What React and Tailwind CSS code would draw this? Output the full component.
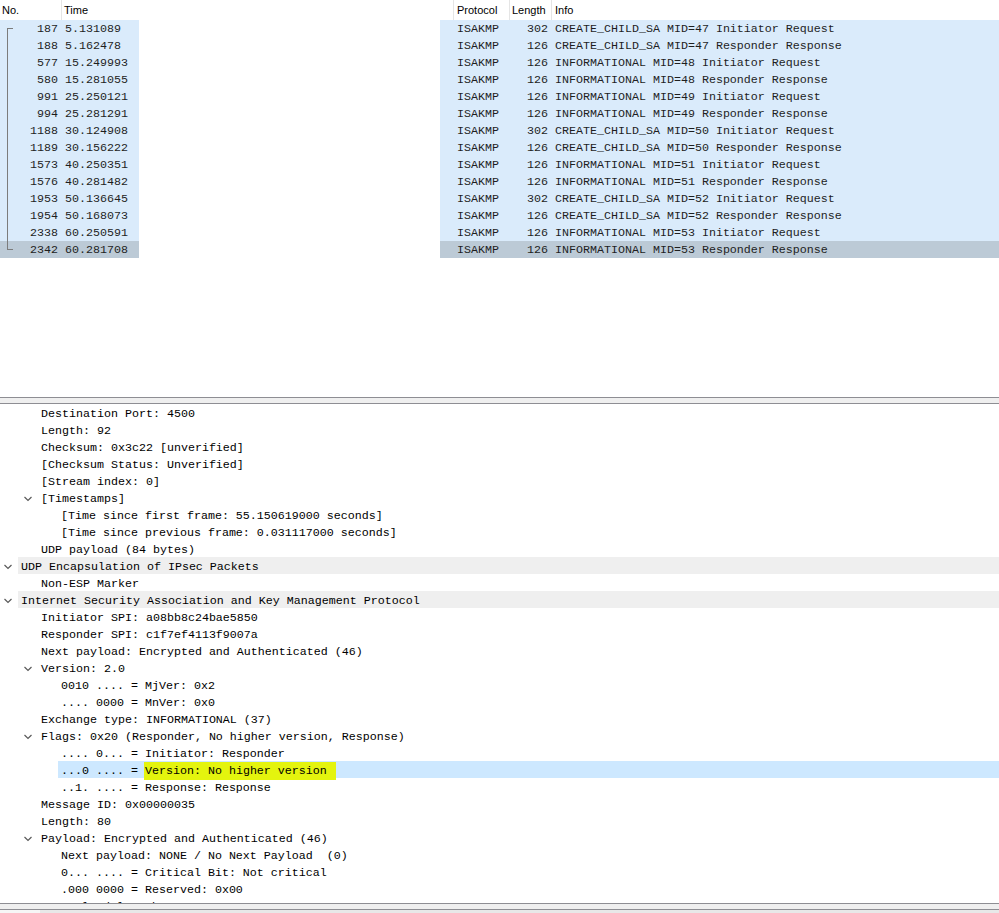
import React from "react";

const MONO = "font-['Liberation_Mono','DejaVu_Sans_Mono',monospace] text-[11.67px]";

const PACKETS = [
  ["187", "5.131089", "302", "CREATE_CHILD_SA MID=47 Initiator Request"],
  ["188", "5.162478", "126", "CREATE_CHILD_SA MID=47 Responder Response"],
  ["577", "15.249993", "126", "INFORMATIONAL MID=48 Initiator Request"],
  ["580", "15.281055", "126", "INFORMATIONAL MID=48 Responder Response"],
  ["991", "25.250121", "126", "INFORMATIONAL MID=49 Initiator Request"],
  ["994", "25.281291", "126", "INFORMATIONAL MID=49 Responder Response"],
  ["1188", "30.124908", "302", "CREATE_CHILD_SA MID=50 Initiator Request"],
  ["1189", "30.156222", "126", "CREATE_CHILD_SA MID=50 Responder Response"],
  ["1573", "40.250351", "126", "INFORMATIONAL MID=51 Initiator Request"],
  ["1576", "40.281482", "126", "INFORMATIONAL MID=51 Responder Response"],
  ["1953", "50.136645", "302", "CREATE_CHILD_SA MID=52 Initiator Request"],
  ["1954", "50.168073", "126", "CREATE_CHILD_SA MID=52 Responder Response"],
  ["2338", "60.250591", "126", "INFORMATIONAL MID=53 Initiator Request"],
  ["2342", "60.281708", "126", "INFORMATIONAL MID=53 Responder Response"],
];

// [level, text, expanded, kind, highlighted tail]
const DETAILS = [
  [1, "Destination Port: 4500"],
  [1, "Length: 92"],
  [1, "Checksum: 0x3c22 [unverified]"],
  [1, "[Checksum Status: Unverified]"],
  [1, "[Stream index: 0]"],
  [1, "[Timestamps]", true],
  [2, "[Time since first frame: 55.150619000 seconds]"],
  [2, "[Time since previous frame: 0.031117000 seconds]"],
  [1, "UDP payload (84 bytes)"],
  [0, "UDP Encapsulation of IPsec Packets", true, "proto"],
  [1, "Non-ESP Marker"],
  [0, "Internet Security Association and Key Management Protocol", true, "proto"],
  [1, "Initiator SPI: a08bb8c24bae5850"],
  [1, "Responder SPI: c1f7ef4113f9007a"],
  [1, "Next payload: Encrypted and Authenticated (46)"],
  [1, "Version: 2.0", true],
  [2, "0010 .... = MjVer: 0x2"],
  [2, ".... 0000 = MnVer: 0x0"],
  [1, "Exchange type: INFORMATIONAL (37)"],
  [1, "Flags: 0x20 (Responder, No higher version, Response)", true],
  [2, ".... 0... = Initiator: Responder"],
  [2, "...0 .... = ", false, "selected", "Version: No higher version"],
  [2, "..1. .... = Response: Response"],
  [1, "Message ID: 0x00000035"],
  [1, "Length: 80"],
  [1, "Payload: Encrypted and Authenticated (46)", true],
  [2, "Next payload: NONE / No Next Payload  (0)"],
  [2, "0... .... = Critical Bit: Not critical"],
  [2, ".000 0000 = Reserved: 0x00"],
  [2, "Payload length: 50"],
];

const CHEV = ["w-[21px]", "w-[41px]", "w-[61px]"];

function Chevron() {
  return (
    <svg width="8" height="6" viewBox="0 0 8 6" className="absolute right-[9px] top-[7px]">
      <path d="M0.5 1 L4 4.5 L7.5 1" fill="none" stroke="#5a5a5a" strokeWidth="1.2" />
    </svg>
  );
}

function HeaderCell({ children, className }) {
  return (
    <div className={`h-full flex items-center border-r border-[#e5e5e5] ${className}`}>{children}</div>
  );
}

function PacketRow({ no, time, len, info, selected }) {
  const bg = selected ? "bg-[#bccad6]" : "bg-[#daebfb]";
  return (
    <div className={`flex h-[17px] leading-[19px] text-[#1e1e1e] ${MONO}`}>
      <div className={`w-[139px] flex ${bg}`}>
        <div className="w-[58px] text-right">{no}</div>
        <div className="pl-[7px]">{time}</div>
      </div>
      <div className="w-[301px] bg-white" />
      <div className={`flex-1 flex ${bg}`}>
        <div className="w-[69px] pl-[17px]">ISAKMP</div>
        <div className="w-[39px] text-right">{len}</div>
        <div className="pl-[7px] whitespace-pre">{info}</div>
      </div>
    </div>
  );
}

function DetailRow({ row }) {
  const [level, text, expanded, kind, mark] = row;
  return (
    <div className={`relative flex h-[17px] leading-[21px] text-black whitespace-pre ${MONO}`}>
      <div className={`relative shrink-0 ${CHEV[level]} -mr-[3px]`}>{expanded && <Chevron />}</div>
      <div
        className={`flex-1 pl-[3px] ${kind === "proto" ? "bg-[#efefef]" : ""} ${
          kind === "selected" ? "bg-[#cde8ff]" : ""
        }`}
      >
        {text}
        {mark && <span className="bg-[#e4f40e] py-[2px] -ml-[1px] pl-[1px] pr-[9px]">{mark}</span>}
      </div>
    </div>
  );
}

export default function App() {
  return (
    <div className="w-[999px] h-[913px] overflow-hidden bg-white flex flex-col">
      {/* ---- Packet list ---- */}
      <div className="relative h-[397px] shrink-0">
        <div className="flex h-[20px] text-[11px] text-black font-['Liberation_Sans',Arial,sans-serif]">
          <HeaderCell className="w-[62px] pl-[2px]">No.</HeaderCell>
          <HeaderCell className="w-[392px] pl-[2px]">Time</HeaderCell>
          <HeaderCell className="w-[56px] pl-[3px]">Protocol</HeaderCell>
          <HeaderCell className="w-[42px] pl-[2px]">Length</HeaderCell>
          <div className="flex-1 flex items-center pl-[3px]">Info</div>
        </div>
        {PACKETS.map((p, i) => (
          <PacketRow
            key={p[0]}
            no={p[0]}
            time={p[1]}
            len={p[2]}
            info={p[3]}
            selected={i === PACKETS.length - 1}
          />
        ))}
        {/* conversation bracket */}
        <div className="absolute left-[7px] top-[28px] h-[222px] w-[6px] border-l border-t border-b border-[#7c7c7c]" />
      </div>

      {/* ---- Splitter ---- */}
      <div className="h-[7px] shrink-0 border-y border-[#8e8e93] bg-[#efefef]" />

      {/* ---- Packet details ---- */}
      <div className="h-[499px] shrink-0 overflow-hidden">
        {DETAILS.map((row, i) => (
          <DetailRow key={i} row={row} />
        ))}
      </div>

      {/* ---- Bottom splitter ---- */}
      <div className="h-[7px] shrink-0 border-y border-[#8e8e93] bg-[#efefef]" />
      <div className="flex-1 flex bg-[#e8e8e8]">
        <div className="w-[40px] bg-[#f6f6f6]" />
      </div>
    </div>
  );
}
